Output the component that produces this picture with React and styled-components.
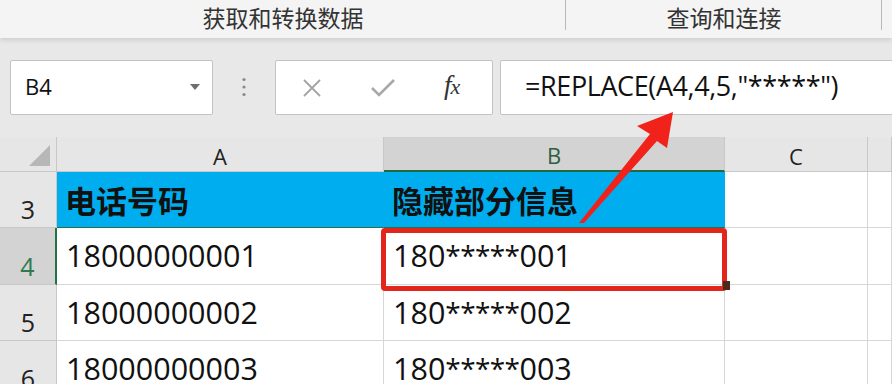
import React from "react";
import styled, { createGlobalStyle } from "styled-components";

const GlobalStyle = createGlobalStyle`
  html, body { margin: 0; padding: 0; background: #e8e8e8; }
  * { box-sizing: border-box; }
`;

const Page = styled.div`
  position: relative;
  width: 892px;
  height: 384px;
  overflow: hidden;
  background: #e8e8e8;
  font-family: "Open Sans", "Noto Sans", "Noto Sans CJK SC", sans-serif;
  color: #111;
`;

const Ribbon = styled.div`
  display: flex;
  height: 38px;
  background: #f4f4f4;
  box-shadow: 0 2px 5px rgba(0, 0, 0, 0.12);
  position: relative;
  z-index: 1;
`;

const RibbonGroup = styled.div`
  position: relative;
  width: ${(p) => p.$width}px;
  display: flex;
  justify-content: center;
  align-items: center;
  padding-bottom: 4px;
  font-family: "Noto Sans CJK SC", sans-serif;
  font-size: 23px;
  color: #333;
  &::after {
    content: "";
    position: absolute;
    right: 0;
    top: 0;
    height: 30px;
    width: 1px;
    background: #b9b9b9;
  }
`;

const Toolbar = styled.div`
  display: flex;
  align-items: stretch;
  height: 55px;
  margin-top: 22px;
  padding-left: 10px;
`;

const NameBox = styled.div`
  width: 203px;
  display: flex;
  align-items: center;
  justify-content: space-between;
  padding: 0 12px 4px 14px;
  background: #fff;
  border: 1px solid #c3c3c3;
  border-radius: 2px;
  font-size: 22px;
  color: #111;
`;

const Caret = styled.span`
  width: 0;
  height: 0;
  border-left: 5px solid transparent;
  border-right: 5px solid transparent;
  border-top: 6px solid #6e6e6e;
  margin-top: 2px;
`;

const Grip = styled.div`
  width: 62px;
  display: flex;
  align-items: center;
  justify-content: center;
  padding-bottom: 2px;
`;

const IconBox = styled.div`
  width: 218px;
  display: flex;
  align-items: center;
  background: #fff;
  border: 1px solid #c3c3c3;
  border-radius: 2px;
  padding-left: 26px;
  gap: 48px;
`;

const Fx = styled.span`
  font-family: "Liberation Serif", "DejaVu Serif", serif;
  font-style: italic;
  font-size: 27px;
  color: #333;
  letter-spacing: -1px;
  margin-left: 0;
  padding-bottom: 4px;
  & small {
    font-size: 22px;
  }
`;

const FormulaBar = styled.div`
  flex: 1;
  margin-left: 7px;
  margin-right: -20px;
  display: flex;
  align-items: center;
  padding: 0 0 4px 24px;
  background: #fff;
  border: 1px solid #c3c3c3;
  border-radius: 2px;
  font-size: 27px;
  color: #111;
  letter-spacing: -0.4px;
`;

const Sheet = styled.div`
  display: grid;
  grid-template-columns: 57px 327px 341px 143px 1fr;
  grid-template-rows: 35px 56px 57px 56px 56px;
  margin-top: 22px;
`;

const Corner = styled.div`
  background: #e6e6e6;
  border-right: 1px solid #c8c8c8;
  border-bottom: 1px solid #c8c8c8;
  display: flex;
  align-items: flex-end;
  justify-content: flex-end;
  padding: 0 6px 5px 0;
`;

const Triangle = styled.span`
  width: 0;
  height: 0;
  border-left: 21px solid transparent;
  border-bottom: 21px solid #b7b7b7;
`;

const ColHeader = styled.div`
  background: ${(p) => (p.$active ? "#d3d3d3" : "#e6e6e6")};
  color: ${(p) => (p.$active ? "#2c5f3f" : "#222")};
  border-right: 1px solid #c8c8c8;
  border-bottom: ${(p) => (p.$active ? "2px solid #1f6b3f" : "1px solid #c8c8c8")};
  display: flex;
  align-items: flex-end;
  justify-content: center;
  font-size: 22px;
  line-height: 1;
  padding-bottom: 4px;
`;

const RowHeader = styled.div`
  background: ${(p) => (p.$active ? "#d3d3d3" : "#e6e6e6")};
  color: ${(p) => (p.$active ? "#2f7a4f" : "#222")};
  border-right: ${(p) => (p.$active ? "2px solid #217346" : "1px solid #c8c8c8")};
  border-bottom: 1px solid #c8c8c8;
  display: flex;
  align-items: flex-end;
  justify-content: center;
  font-size: 25px;
  line-height: 1;
  padding-bottom: 5px;
`;

const Cell = styled.div`
  background: ${(p) => p.$fill || "#fff"};
  border-right: 1px solid ${(p) => p.$fill || "#d6d6d6"};
  border-bottom: 1px solid ${(p) => (p.$fill ? "#2a6f4a" : "#d6d6d6")};
  display: flex;
  align-items: center;
  padding: ${(p) => (p.$bold ? "0 0 0 8px" : "0 0 2px 9px")};
  font-family: ${(p) =>
    p.$bold
      ? `"Noto Sans CJK SC", sans-serif`
      : `"Open Sans", "Noto Sans", sans-serif`};
  font-weight: ${(p) => (p.$bold ? 700 : 400)};
  font-size: ${(p) => (p.$bold ? "31px" : "30.5px")};
  color: #111;
  white-space: nowrap;
  overflow: hidden;
`;

const Stars = styled.span`
  font-size: 28px;
  letter-spacing: -0.6px;
`;

const RedFrame = styled.div`
  position: absolute;
  left: 381px;
  top: 228px;
  width: 346px;
  height: 63px;
  border: 5px solid #e3261c;
  border-radius: 4px;
  pointer-events: none;
`;

const FillHandle = styled.div`
  position: absolute;
  left: 723px;
  top: 281px;
  width: 7px;
  height: 9px;
  background: #4a2a1e;
`;

const Overlay = styled.svg`
  position: absolute;
  left: 0;
  top: 0;
  pointer-events: none;
`;

const CrossIcon = () => (
  <svg width="20" height="20" viewBox="0 0 20 20">
    <path d="M2 2 L18 18 M18 2 L2 18" stroke="#a3a3a3" strokeWidth="1.8" fill="none" />
  </svg>
);

const CheckIcon = () => (
  <svg width="26" height="20" viewBox="0 0 26 20">
    <path d="M2 10 L9 17 L24 2" stroke="#a8a8a8" strokeWidth="2.6" fill="none" />
  </svg>
);

const DotsIcon = () => (
  <svg width="6" height="20" viewBox="0 0 6 20">
    <circle cx="3" cy="2.5" r="1.6" fill="#8a8a8a" />
    <circle cx="3" cy="10" r="1.6" fill="#8a8a8a" />
    <circle cx="3" cy="17.5" r="1.6" fill="#8a8a8a" />
  </svg>
);

const masked = (tail) => (
  <>
    180<Stars>*****</Stars>
    {tail}
  </>
);

const rows = [
  { n: 3, a: "电话号码", b: "隐藏部分信息", head: true },
  { n: 4, a: "18000000001", b: masked("001"), active: true },
  { n: 5, a: "18000000002", b: masked("002") },
  { n: 6, a: "18000000003", b: masked("003") },
];

export default function App() {
  return (
    <>
      <GlobalStyle />
      <Page>
        <Ribbon>
          <RibbonGroup $width={566}>获取和转换数据</RibbonGroup>
          <RibbonGroup $width={316}>查询和连接</RibbonGroup>
        </Ribbon>
        <Toolbar>
          <NameBox>
            <span>B4</span>
            <Caret />
          </NameBox>
          <Grip>
            <DotsIcon />
          </Grip>
          <IconBox>
            <CrossIcon />
            <CheckIcon />
            <Fx>
              f<small>x</small>
            </Fx>
          </IconBox>
          <FormulaBar>=REPLACE(A4,4,5,"*****")</FormulaBar>
        </Toolbar>
        <Sheet>
          <Corner>
            <Triangle />
          </Corner>
          <ColHeader>A</ColHeader>
          <ColHeader $active>B</ColHeader>
          <ColHeader>C</ColHeader>
          <ColHeader />
          {rows.map((r) => (
            <React.Fragment key={r.n}>
              <RowHeader $active={r.active}>{r.n}</RowHeader>
              <Cell $fill={r.head ? "#00aeef" : undefined} $bold={r.head}>
                {r.a}
              </Cell>
              <Cell $fill={r.head ? "#00aeef" : undefined} $bold={r.head}>
                {r.b}
              </Cell>
              <Cell />
              <Cell />
            </React.Fragment>
          ))}
        </Sheet>
        <RedFrame />
        <FillHandle />
        <Overlay width="892" height="384" viewBox="0 0 892 384">
          <polygon
            points="579,223 584,223 657,141 667,148 673,112 637,126 650,134"
            fill="#f0221a"
          />
        </Overlay>
      </Page>
    </>
  );
}
